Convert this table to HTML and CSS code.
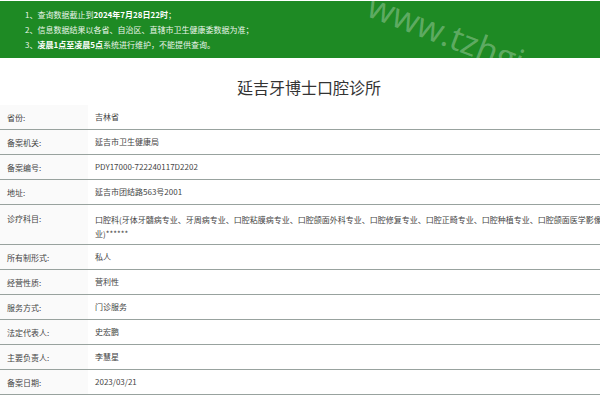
FILE: index.html
```html
<!DOCTYPE html>
<html lang="zh-CN">
<head>
<meta charset="utf-8">
<title>延吉牙博士口腔诊所</title>
<link rel="stylesheet" href="styles.css">
</head>
<body>
<div class="page">
  <div class="banner">
    <p>1、查询数据截止到<b>2024年7月28日22时</b>；</p>
    <p>2、信息数据结果以各省、自治区、直辖市卫生健康委数据为准；</p>
    <p>3、<b>凌晨1点至凌晨5点</b>系统进行维护，不能提供查询。</p>
  </div>
  <h1 class="title">延吉牙博士口腔诊所</h1>
  <div class="info">
    <div class="row"><div class="label">省份:</div><div class="value">吉林省</div></div>
    <div class="row"><div class="label">备案机关:</div><div class="value">延吉市卫生健康局</div></div>
    <div class="row"><div class="label">备案编号:</div><div class="value">PDY17000-722240117D2202</div></div>
    <div class="row"><div class="label">地址:</div><div class="value">延吉市团结路563号2001</div></div>
    <div class="row tall"><div class="label">诊疗科目:</div><div class="value">口腔科(牙体牙髓病专业、牙周病专业、口腔粘膜病专业、口腔颌面外科专业、口腔修复专业、口腔正畸专业、口腔种植专业、口腔颌面医学影像专业)******</div></div>
    <div class="row"><div class="label">所有制形式:</div><div class="value">私人</div></div>
    <div class="row"><div class="label">经营性质:</div><div class="value">营利性</div></div>
    <div class="row"><div class="label">服务方式:</div><div class="value">门诊服务</div></div>
    <div class="row"><div class="label">法定代表人:</div><div class="value">史宏鹏</div></div>
    <div class="row"><div class="label">主要负责人:</div><div class="value">李慧星</div></div>
    <div class="row"><div class="label">备案日期:</div><div class="value">2023/03/21</div></div>
  </div>
  <div class="watermark">www.tzhgj.com</div>
</div>
</body>
</html>
```
FILE: styles.css
```css
html, body {
  margin: 0;
  padding: 0;
  overflow: hidden;
  background: #fff;
}
body {
  font-family: "Noto Sans CJK SC", "Noto Sans", sans-serif;
  color: #333;
}
.page {
  position: relative;
  width: 600px;
  height: 400px;
  overflow: hidden;
}
.banner {
  background: #1e8a24;
  height: 57px;
  margin-top: 1px;
  box-sizing: border-box;
  padding: 6px 0 0 25px;
  color: #eaf5ea;
}
.banner p {
  margin: 0;
  font-size: 8px;
  line-height: 15px;
}
.banner b {
  font-weight: 700;
  color: #fff;
}
.title {
  margin: 0;
  padding: 20px 0 8px 18px;
  text-align: center;
  font-size: 16px;
  line-height: 19px;
  font-weight: 400;
  color: #333;
}
.info {
  width: 614px;
}
.row {
  display: grid;
  grid-template-columns: 88px 1fr;
  border-bottom: 1px solid #98a29e;
  height: 25px;
  box-sizing: border-box;
  font-size: 8px;
}
.row.tall {
  height: 40px;
}
.label {
  background: #fafafa;
  padding-left: 7px;
  display: flex;
  align-items: center;
  color: #444;
}
.value {
  padding-left: 7px;
  display: flex;
  align-items: center;
  color: #444;
  line-height: 14px;
}
.tall .label {
  align-items: flex-start;
  padding-top: 8px;
}
.tall .value {
  align-items: flex-start;
  padding-top: 8px;
}
.watermark {
  position: absolute;
  left: 378px;
  top: -18px;
  font-family: "Open Sans", sans-serif;
  font-size: 34px;
  color: rgba(255, 255, 255, 0.3);
  transform: rotate(21deg);
  transform-origin: left top;
  pointer-events: none;
  white-space: nowrap;
}
```
